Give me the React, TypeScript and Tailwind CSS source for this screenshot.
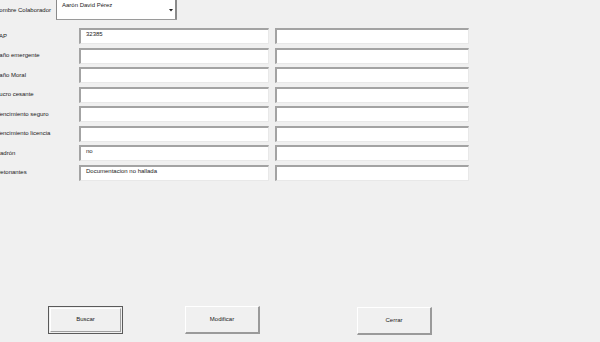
import React from 'react'

const FIELDS = [
  { label: 'SAP', value: '32385', shift: 'ml-[-5px]' },
  { label: 'Daño emergente', value: '', shift: 'ml-[-5px]' },
  { label: 'Daño Moral', value: '', shift: 'ml-[-5px]' },
  { label: 'Lucro cesante', value: '', shift: 'ml-[-4px]' },
  { label: 'Vencimiento seguro', value: '', shift: 'ml-[-4px]' },
  { label: 'Vencimiento licencia', value: '', shift: 'ml-[-4px]' },
  { label: 'Padrón', value: 'no', shift: 'ml-[-4px]' },
  { label: 'Detonantes', value: 'Documentacion no hallada', shift: 'ml-[-4px]' },
]

function TextBox({ value, width }: { value: string; width: string }) {
  return (
    <div
      className={`${width} h-full bg-white border-t-2 border-l-2 border-r border-b border-t-[#a3a3a3] border-l-[#a3a3a3] border-r-[#e8e8e8] border-b-[#e8e8e8] pl-[5px] pt-[1px] leading-[7px] text-[#222]`}
    >
      {value}
    </div>
  )
}

function Btn({ text, focused }: { text: string; focused?: boolean }) {
  if (focused) {
    return (
      <div className="w-[75px] h-[28px] border border-[#5a5a5a] p-[1px]">
        <div className="w-full h-full flex items-center justify-center border border-t-white border-l-white border-b-[#a0a0a0] border-r-[#a0a0a0] bg-[#f0f0f0]">
          {text}
        </div>
      </div>
    )
  }
  return (
    <div className="w-[75px] h-[28px] flex items-center justify-center border border-t-white border-l-white border-b-2 border-r-2 border-b-[#9a9a9a] border-r-[#9a9a9a] bg-[#f0f0f0]">
      {text}
    </div>
  )
}

export default function App() {
  return (
    <div className="w-[600px] h-[342px] overflow-hidden bg-[#f0f0f0] font-['Liberation_Sans',Arial,sans-serif] text-[6px] text-[#1a1a1a]">
      {/* Colaborador selector */}
      <div className="flex items-start h-[20px]">
        <div className="w-[56px] overflow-hidden whitespace-nowrap pt-[6px]">
          <span className="ml-[-5px]">Nombre Colaborador</span>
        </div>
        <div className="w-[121px] h-[22px] -mt-[2px] bg-white border-l border-b border-l-[#8a8a8a] border-b-[#9a9a9a] flex">
          <div className="flex-1 pl-[5px] pt-[4px] leading-[7px]">Aarón David Pérez</div>
          <div className="w-[10px] h-full border-r-2 border-r-[#8a8a8a] flex items-center justify-center">
            <svg width="4" height="3" viewBox="0 0 4 3" className="mt-[3px]">
              <path d="M0 0 L4 0 L2 2.5 Z" fill="#222" />
            </svg>
          </div>
        </div>
      </div>

      {/* Fields */}
      <div className="mt-[8px] flex flex-col gap-[3.5px]">
        {FIELDS.map((f) => (
          <div key={f.label} className="flex items-stretch h-[16px]">
            <div className="w-[79px] overflow-hidden whitespace-nowrap flex items-center">
              <span className={f.shift}>{f.label}</span>
            </div>
            <TextBox value={f.value} width="w-[190px]" />
            <div className="w-[6px]" />
            <TextBox value="" width="w-[194px]" />
          </div>
        ))}
      </div>

      {/* Buttons */}
      <div className="flex mt-[125px]">
        <div className="ml-[48px]">
          <Btn text="Buscar" focused />
        </div>
        <div className="ml-[62px]">
          <Btn text="Modificar" />
        </div>
        <div className="ml-[97px] mt-[1px]">
          <Btn text="Cerrar" />
        </div>
      </div>
    </div>
  )
}
